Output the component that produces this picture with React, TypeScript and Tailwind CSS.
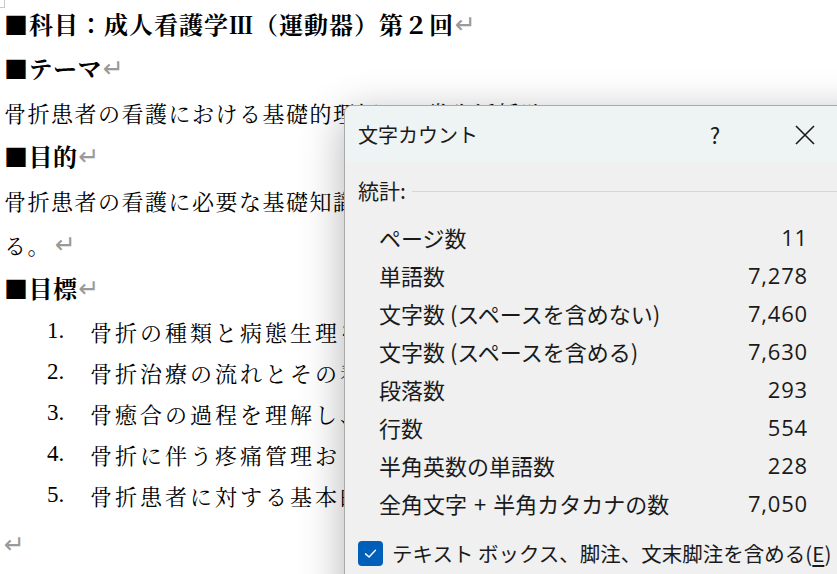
const docFont = "font-['Noto_Serif_CJK_JP','Liberation_Serif','Noto_Sans_CJK_JP',serif]";

function Ret({ className = "" }: { className?: string }) {
  return (
    <span className={`font-['DejaVu_Sans',sans-serif] text-[25px] leading-none text-[#9a9a9a] tracking-normal font-normal ${className}`}>
      ↵
    </span>
  );
}

const stats: [string, string][] = [
  ["ページ数", "11"],
  ["単語数", "7,278"],
  ["文字数 (スペースを含めない)", "7,460"],
  ["文字数 (スペースを含める)", "7,630"],
  ["段落数", "293"],
  ["行数", "554"],
  ["半角英数の単語数", "228"],
  ["全角文字 + 半角カタカナの数", "7,050"],
];

const goals = [
  "骨折の種類と病態生理を理解する。",
  "骨折治療の流れとその看護を理解する。",
  "骨癒合の過程を理解し、観察の視点を学ぶ。",
  "骨折に伴う疼痛管理および合併症予防を学ぶ。",
  "骨折患者に対する基本的な看護技術を習得する。",
];

function Label({ text }: { text: string }) {
  if (text.includes(" + ")) {
    const [a, b] = text.split(" + ");
    return (
      <span>
        {a}
        <span className="mx-[7px]">+</span>
        {b}
      </span>
    );
  }
  return <span>{text}</span>;
}

export default function App() {
  return (
    <div className="relative w-[837px] h-[574px] overflow-hidden bg-white">
      {/* page corner mark */}
      <div className="absolute left-0 top-0 w-[5px] h-[8px] border-r border-b border-[#c8c8c8]" />

      {/* document */}
      <div className={`${docFont} text-black pt-[2px] pl-[4px] whitespace-nowrap`}>
        <div className="h-[44px] flex items-center text-[24px] font-bold tracking-[1px]">
          ■科目：成人看護学Ⅲ（運動器）第２回<Ret className="ml-[1px]" />
        </div>
        <div className="h-[44px] flex items-center text-[24px] font-bold tracking-[0.5px]">
          ■テーマ<Ret className="ml-[1px]" />
        </div>
        <div className="h-[44px] flex items-center text-[22px] tracking-[1.5px]">
          骨折患者の看護における基礎的理解と日常生活援助
        </div>
        <div className="h-[44px] flex items-center text-[24px] font-bold tracking-[0.5px]">
          ■目的<Ret className="ml-[1px]" />
        </div>
        <div className="h-[44px] flex items-center text-[22px] tracking-[1.5px]">
          骨折患者の看護に必要な基礎知識と技術を習得し、適切な看護を実践する力を身につけ
        </div>
        <div className="h-[44px] flex items-center text-[22px] tracking-[1.5px]">
          る。<Ret className="ml-[4px]" />
        </div>
        <div className="h-[44px] flex items-center text-[24px] font-bold tracking-[0.5px]">
          ■目標<Ret className="ml-[1px]" />
        </div>
        <div className="pl-[43px] pt-[1px]">
          {goals.map((g, i) => (
            <div key={i} className="h-[41px] flex items-center text-[22px] tracking-[3px]">
              <span className="w-[43px] font-['Liberation_Serif',serif] text-[23px] tracking-normal">{i + 1}.</span>
              <span>{g}</span>
            </div>
          ))}
        </div>
        <div className="h-[44px] mt-[6px] flex items-center">
          <Ret />
        </div>
      </div>

      {/* dialog */}
      <div className="absolute left-[344px] top-[105px] w-[540px] h-[520px] rounded-tl-[8px] border-l border-t border-[#a9a9a9] bg-[#f0f0f0] overflow-hidden shadow-[0_10px_44px_rgba(0,0,0,0.3)] font-['Noto_Sans_CJK_JP',sans-serif] text-[#1a1a1a]">
        {/* title bar */}
        <div className="h-[57px] bg-[#eef3f4] flex items-center pl-[13px]">
          <span className="text-[20px]">文字カウント</span>
          <span className="ml-[227px] text-[22px] w-[20px] text-center">?</span>
          <svg className="ml-[70px]" width="20" height="20" viewBox="0 0 20 20">
            <path d="M1 1 L19 19 M19 1 L1 19" stroke="#1a1a1a" strokeWidth="1.6" fill="none" />
          </svg>
        </div>

        {/* body */}
        <div className="pt-[14px]">
          <div className="flex items-center pl-[13px] h-[28px]">
            <span className="text-[21px]">統計:</span>
            <div className="flex-1 ml-[6px] h-px bg-[#d6d6d6]" />
          </div>
          <div className="mt-[13px] ml-[34px] w-[429px]">
            {stats.map(([k, v]) => (
              <div key={k} className="h-[38px] flex items-center justify-between text-[22px]">
                <Label text={k} />
                <span className="font-['Open_Sans',sans-serif] text-[22px] tracking-[0.8px]">{v}</span>
              </div>
            ))}
          </div>
          <div className="mt-[16px] ml-[13px] flex items-center h-[30px]">
            <div className="w-[25px] h-[25px] rounded-[4px] bg-[#005fb8] flex items-center justify-center">
              <svg width="17" height="17" viewBox="0 0 24 24">
                <path d="M5 12.5 L10 17 L19 7.5" stroke="white" strokeWidth="2" fill="none" strokeLinecap="round" strokeLinejoin="round" />
              </svg>
            </div>
            <span className="ml-[9px] text-[20.5px] whitespace-nowrap">
              テキスト ボックス、脚注、文末脚注を含める(<span className="underline underline-offset-[3px]">E</span>)
            </span>
          </div>
        </div>
      </div>
    </div>
  );
}
